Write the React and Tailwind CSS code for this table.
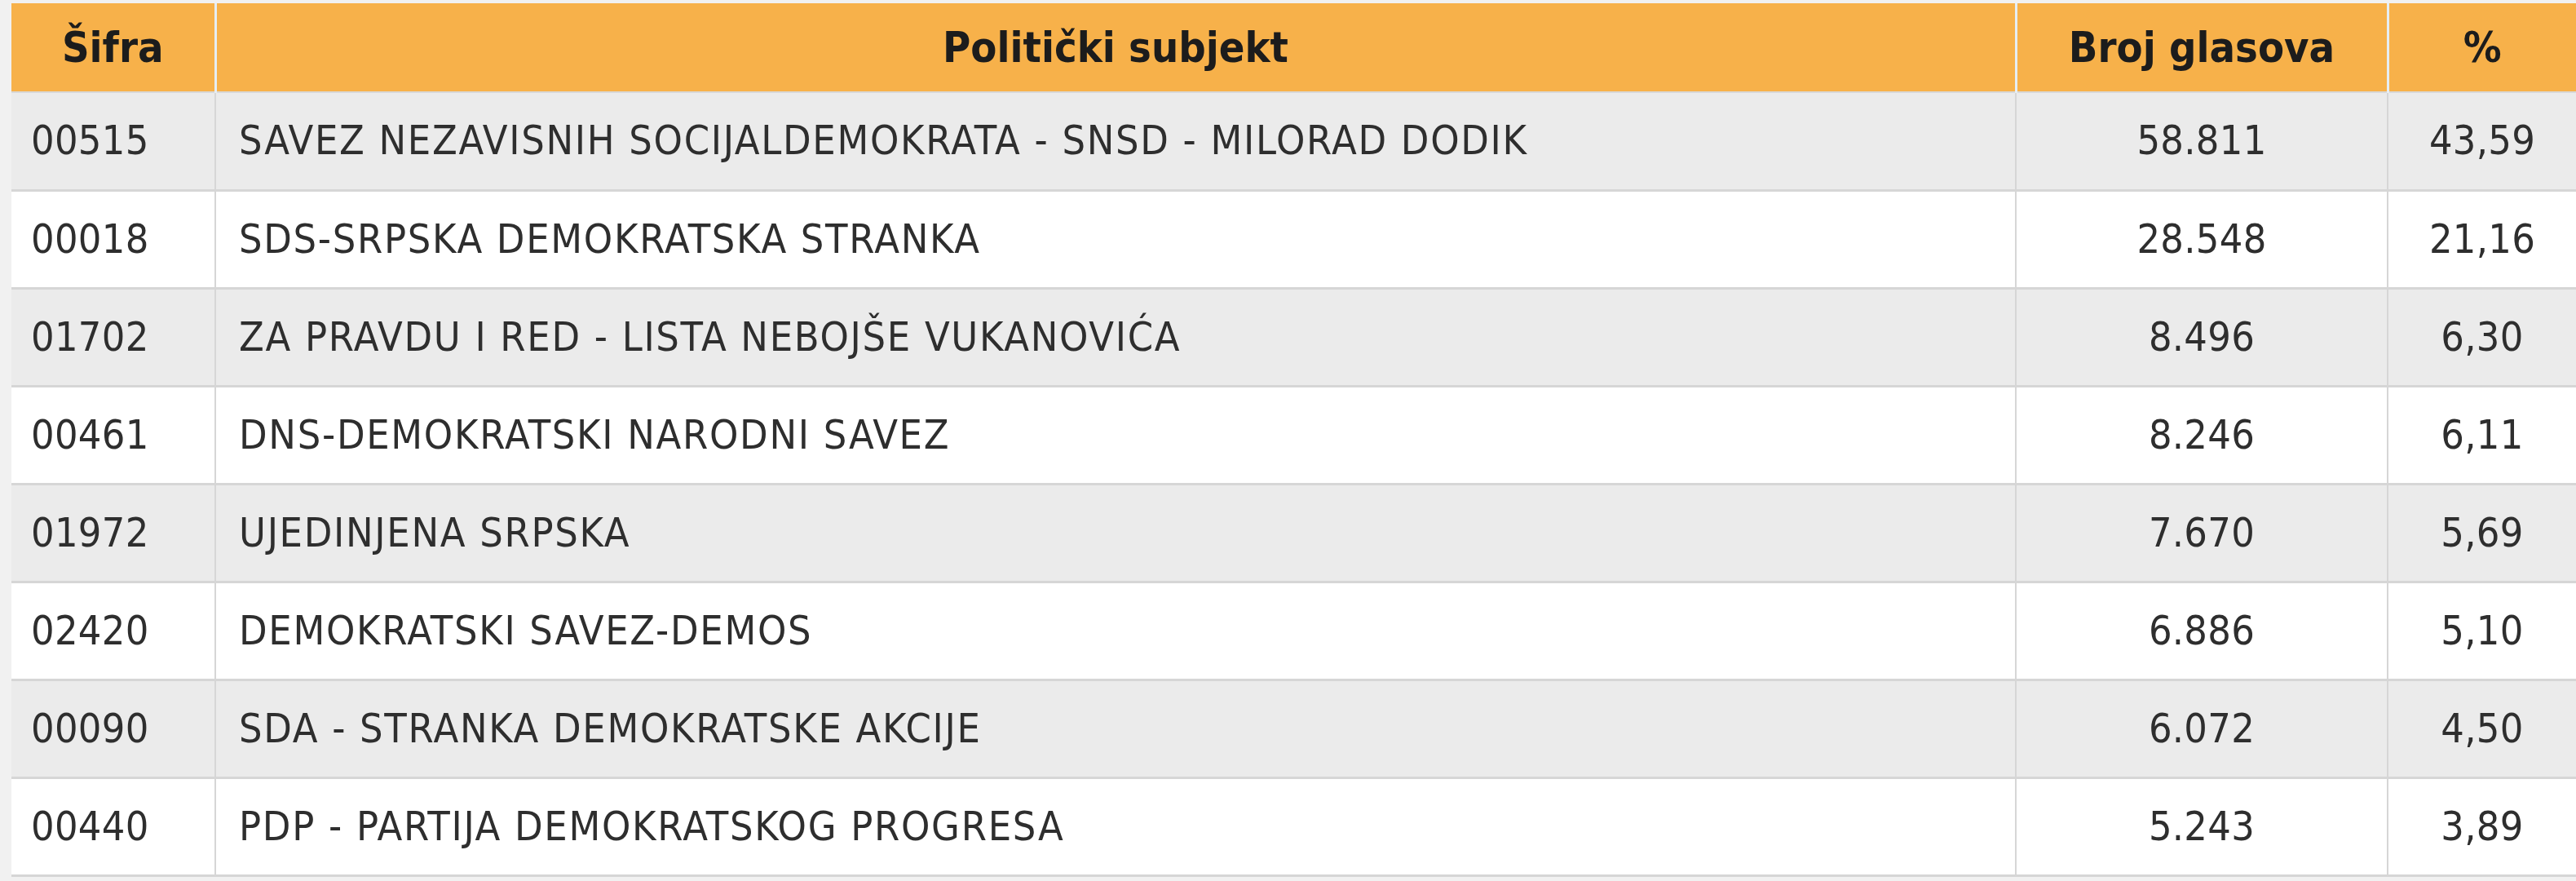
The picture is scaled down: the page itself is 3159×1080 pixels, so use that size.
const rows = [
  { code: '00515', name: 'SAVEZ NEZAVISNIH SOCIJALDEMOKRATA - SNSD - MILORAD DODIK', votes: '58.811', pct: '43,59' },
  { code: '00018', name: 'SDS-SRPSKA DEMOKRATSKA STRANKA', votes: '28.548', pct: '21,16' },
  { code: '01702', name: 'ZA PRAVDU I RED - LISTA NEBOJŠE VUKANOVIĆA', votes: '8.496', pct: '6,30' },
  { code: '00461', name: 'DNS-DEMOKRATSKI NARODNI SAVEZ', votes: '8.246', pct: '6,11' },
  { code: '01972', name: 'UJEDINJENA SRPSKA', votes: '7.670', pct: '5,69' },
  { code: '02420', name: 'DEMOKRATSKI SAVEZ-DEMOS', votes: '6.886', pct: '5,10' },
  { code: '00090', name: 'SDA - STRANKA DEMOKRATSKE AKCIJE', votes: '6.072', pct: '4,50' },
  { code: '00440', name: 'PDP - PARTIJA DEMOKRATSKOG PROGRESA', votes: '5.243', pct: '3,89' },
];

export default function App() {
  return (
    <div className="w-[3159px] h-[1080px] overflow-hidden bg-[#f1f1f1] pl-[14px] pt-[4px] font-['DejaVu_Sans_Condensed','DejaVu_Sans',sans-serif]">
      <table className="w-[3145px] table-fixed border-collapse">
        <colgroup>
          <col className="w-[250px]" />
          <col className="w-[2208px]" />
          <col className="w-[456px]" />
          <col className="w-[231px]" />
        </colgroup>
        <thead>
          <tr className="h-[109px] bg-[#f7b14a] text-[52px] font-bold text-[#1c1c1c]">
            <th className="border-b-2 border-b-[#d9d9d9] border-r-[3px] border-r-[#e6eef4] text-center">Šifra</th>
            <th className="border-b-2 border-b-[#d9d9d9] border-r-[3px] border-r-[#e6eef4] text-center">Politički subjekt</th>
            <th className="border-b-2 border-b-[#d9d9d9] border-r-[3px] border-r-[#e6eef4] text-center">Broj glasova</th>
            <th className="border-b-2 border-b-[#d9d9d9] text-center">%</th>
          </tr>
        </thead>
        <tbody>
          {rows.map((r, i) => (
            <tr key={r.code} className={`h-[120px] text-[50px] tracking-[0.3px] text-[#2e2e2e] ${i % 2 === 0 ? 'bg-[#ebebeb]' : 'bg-white'}`}>
              <td className="border-b-[3px] border-b-[#d6d6d6] border-r-2 border-r-[#d6d6d6] pl-[24px]">{r.code}</td>
              <td className="border-b-[3px] border-b-[#d6d6d6] border-r-2 border-r-[#d6d6d6] pl-[28px] tracking-[1.7px]">{r.name}</td>
              <td className="border-b-[3px] border-b-[#d6d6d6] border-r-2 border-r-[#d6d6d6] text-center">{r.votes}</td>
              <td className="border-b-[3px] border-b-[#d6d6d6] text-center">{r.pct}</td>
            </tr>
          ))}
        </tbody>
      </table>
    </div>
  );
}
